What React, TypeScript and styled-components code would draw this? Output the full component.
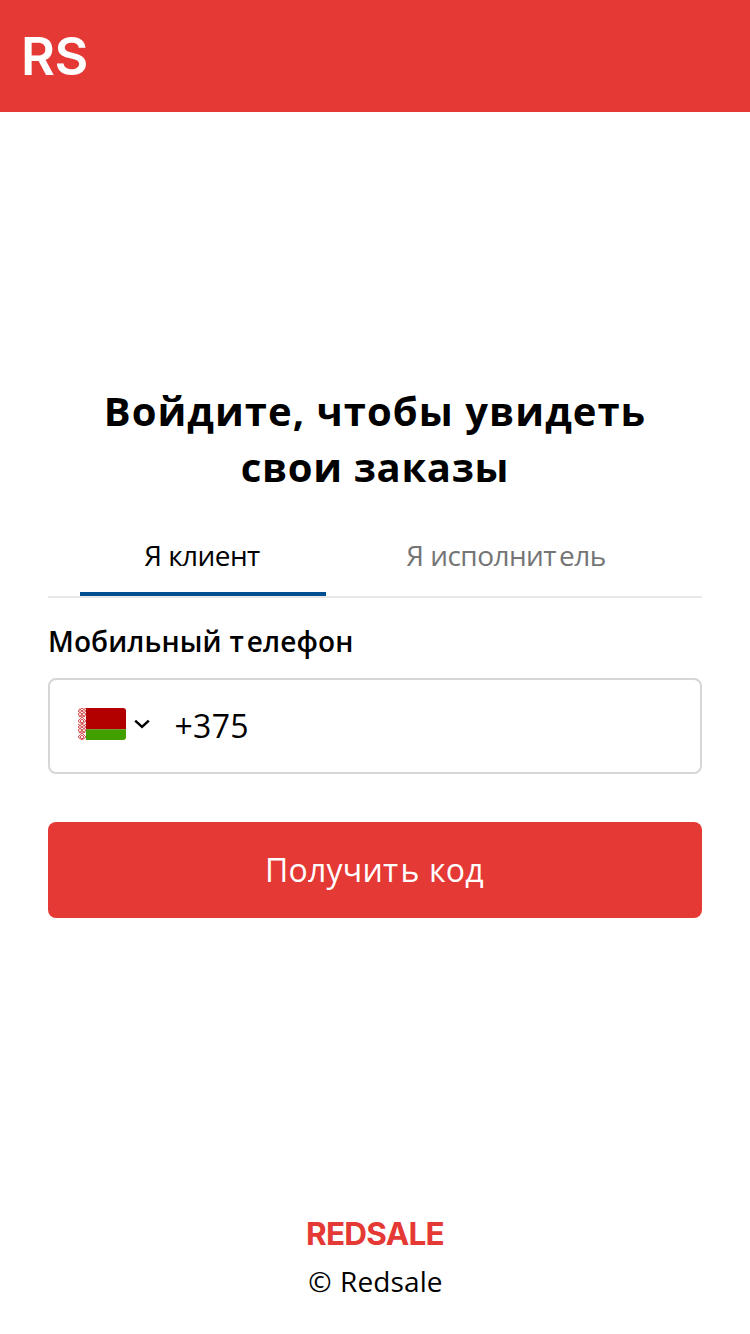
import React from 'react';
import styled, { createGlobalStyle } from 'styled-components';

const Global = createGlobalStyle`
  *{box-sizing:border-box}
  body{margin:0;background:#fff;color:#000;font-family:"Open Sans","Noto Sans",sans-serif}
  button{font-family:inherit;background:none;border:0;padding:0}
`;
const Page = styled.div`display:flex;flex-direction:column;height:1334px;`;
const Header = styled.header`height:112px;flex:none;background:#e53935;padding:31px 0 0 21px;`;
const Logo = styled.div<{ $size: number; $color: string; $weight: number; $ls: number }>`
  font-family:Inter,sans-serif;font-size:${p => p.$size}px;line-height:1;font-weight:${p => p.$weight};color:${p => p.$color};letter-spacing:${p => p.$ls}px;
`;
const Main = styled.main`padding:271px 48px 0;flex:1;`;
const Title = styled.h1`margin:0;font-size:40px;line-height:56px;font-weight:700;text-align:center;`;
const Spaced = styled.span<{ $ls: number }>`letter-spacing:${p => p.$ls}px;`;
const Tabs = styled.div`display:flex;margin-top:21px;height:82px;padding-left:32px;border-bottom:2px solid #e8e8e8;`;
const Tab = styled.button<{ $active?: boolean; $w: number }>`
  width:${p => p.$w}px;height:80px;padding:2px 2px 0 0;font-size:28px;line-height:40px;text-align:center;letter-spacing:-.55px;
  color:${p => (p.$active ? '#000' : '#757575')};border-bottom:4px solid ${p => (p.$active ? '#005091' : 'transparent')};
`;
const Label = styled.label`display:block;margin-top:23px;font-size:28px;line-height:40px;font-weight:600;letter-spacing:.1px;word-spacing:.6px;`;
const Field = styled.div`display:flex;align-items:center;margin-top:17px;height:96px;border:2px solid #d6d6d6;border-radius:8px;padding-left:28px;`;
const Country = styled.div`display:flex;align-items:center;gap:8px;margin-bottom:4px;`;
const Code = styled.span`font-size:32px;margin:0 0 2px 24.5px;letter-spacing:.3px;`;
const Submit = styled.button`display:block;margin-top:48px;padding:0 1px 2px 0;width:100%;height:96px;border-radius:8px;background:#e53935;color:#fff;font-size:32px;letter-spacing:.2px;word-spacing:1px;`;
const Footer = styled.footer`display:flex;flex-direction:column;align-items:center;height:116px;flex:none;`;
const Copy = styled.div`font-size:28px;line-height:40px;margin:11px 0 0 1px;letter-spacing:.1px;word-spacing:1px;`;

const Flag = () => (
  <svg width="48" height="32" viewBox="0 0 48 32">
    <defs>
      <clipPath id="flag"><rect width="48" height="32" rx="3" /></clipPath>
      <pattern id="ornament" width="8" height="16" patternUnits="userSpaceOnUse">
        <path d="M0 0L8 6M8 0L0 6M0 3L4 0L8 3L4 6ZM0 6L2 9L4 6L6 9L8 6M1 8H7M0 13L4 9L8 13L4 16ZM2 13L4 11L6 13L4 15Z" fill="none" stroke="#cf3f3f" strokeWidth=".9" />
      </pattern>
    </defs>
    <g clipPath="url(#flag)">
      <rect width="48" height="32" fill="#fbeeee" />
      <rect width="8" height="32" fill="url(#ornament)" />
      <rect x="8" width="40" height="21.3" fill="#b20000" />
      <rect x="8" y="21.3" width="40" height="11" fill="#429f00" />
    </g>
  </svg>
);

export default function App() {
  return (
    <Page>
      <Global />
      <Header><Logo $size={52} $color="#fff" $weight={600} $ls={-0.4}>RS</Logo></Header>
      <Main>
        <Title><Spaced $ls={1.05}>Войдите, чтобы увидеть</Spaced><br /><Spaced $ls={0.65}>свои заказы</Spaced></Title>
        <Tabs>
          <Tab $active $w={246}>Я клиент</Tab>
          <Tab $w={362}>Я исполни<Spaced $ls={2.5}>т</Spaced>ель</Tab>
        </Tabs>
        <Label>Мобильный <Spaced $ls={3}>т</Spaced>елефон</Label>
        <Field>
          <Country>
            <Flag />
            <svg width="16" height="12" viewBox="0 0 16 12"><path d="M1.2 2.6L8 8.8L14.8 2.6" fill="none" stroke="#000" strokeWidth="2.5" /></svg>
          </Country>
          <Code>+375</Code>
        </Field>
        <Submit>Получи<Spaced $ls={2.5}>т</Spaced>ь код</Submit>
      </Main>
      <Footer><Logo $size={31.5} $color="#e53935" $weight={700} $ls={-0.75}>REDSALE</Logo><Copy>© Redsale</Copy></Footer>
    </Page>
  );
}
